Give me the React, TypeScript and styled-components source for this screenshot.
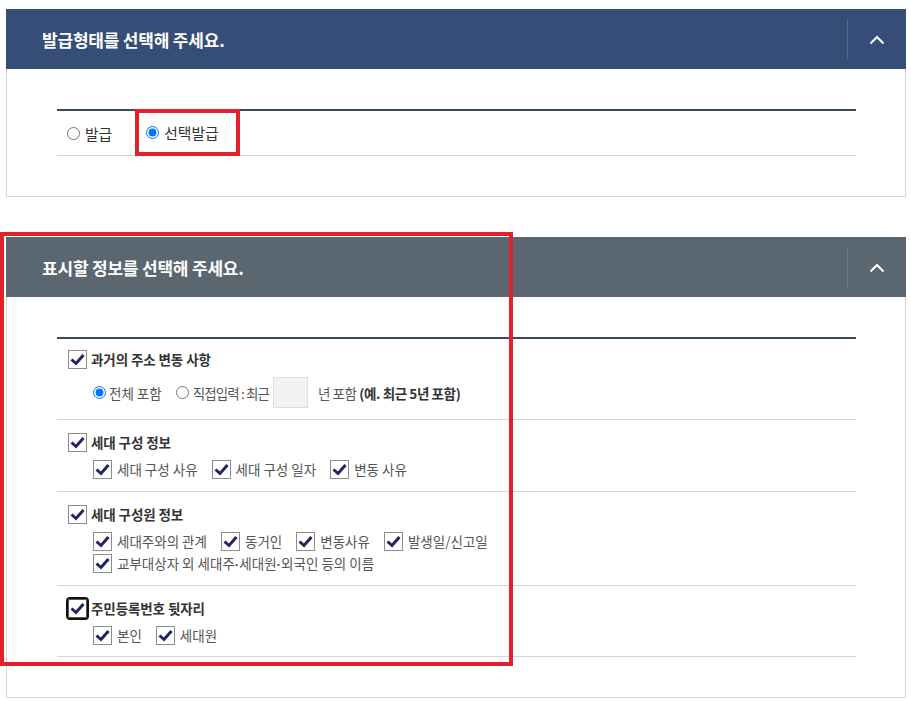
import React from "react";
import styled, { createGlobalStyle } from "styled-components";

const GlobalStyle = createGlobalStyle`
  html, body { margin: 0; padding: 0; background: #fff; }
  body {
    font-family: "Noto Sans CJK KR", "Noto Sans", sans-serif;
    color: #333;
    font-size: 13px;
  }
  * { box-sizing: border-box; }
`;

const Page = styled.div`
  width: 906px;
  padding: 9px 0 4px 6px;
  display: flex;
  flex-direction: column;
  gap: 40px;
`;

const Panel = styled.section`
  position: relative;
  width: 900px;
`;

const Header = styled.div<{ $tone: string }>`
  height: 60px;
  background: ${(p) => p.$tone};
  display: flex;
  align-items: center;
`;

const Title = styled.h2`
  flex: 1;
  margin: 0;
  padding-left: 36px;
  font-size: 17px;
  font-weight: 700;
  color: #fff;
  letter-spacing: -0.2px;
`;

const Toggle = styled.button`
  width: 59px;
  height: 40px;
  padding: 2px 0 0 0;
  border: none;
  border-left: 1px solid rgba(255, 255, 255, 0.14);
  background: transparent;
  display: flex;
  align-items: center;
  justify-content: center;
  cursor: pointer;
`;

const Body = styled.div`
  border: 1px solid #d6d6d6;
  border-top: none;
  padding: 40px 49px 40px 50px;
`;

const Table = styled.div`
  border-top: 2px solid #3c4a60;
`;

const RadioRow = styled.div`
  height: 45px;
  border-bottom: 1px solid #d6d6d6;
  display: flex;
  align-items: center;
  padding-left: 10px;
  gap: 23px;
`;

const RadioLabel = styled.label<{ $highlight?: boolean }>`
  display: flex;
  align-items: center;
  gap: 5px;
  font-size: 14.8px;
  color: #333;
  ${(p) =>
    p.$highlight
      ? `
    align-self: stretch;
    margin: -2px 0 -1px 0;
    padding: 0 17px 0 7px;
    border: 4px solid #e4202c;
  `
      : ""}
`;

const Radio = styled.input.attrs({ type: "radio" })`
  width: 13px;
  height: 13px;
  margin: 0;
`;

const Row = styled.div<{ $pt?: number; $pb?: number }>`
  border-bottom: 1px solid #d6d6d6;
  padding: ${(p) => p.$pt ?? 11}px 0 ${(p) => p.$pb ?? 11}px 11px;
  display: flex;
  flex-direction: column;
  gap: 5px;
`;

const MainLine = styled.label`
  height: 22px;
  display: flex;
  align-items: center;
  gap: 4px;
  font-size: 13.5px;
  font-weight: 700;
  color: #333;
  letter-spacing: -0.1px;
`;

const SubLines = styled.div<{ $mt?: number }>`
  margin-top: ${(p) => p.$mt ?? 0}px;
  padding-left: 25px;
  display: flex;
  flex-direction: column;
`;

const SubLine = styled.div<{ $h?: number }>`
  height: ${(p) => p.$h ?? 22}px;
  display: flex;
  align-items: center;
  gap: 14px;
  font-size: 13.5px;
  color: #555;
`;

const SubItem = styled.label`
  display: flex;
  align-items: center;
  gap: 5px;
`;

const RadioItem = styled.label<{ $gap?: number }>`
  display: flex;
  align-items: center;
  gap: ${(p) => p.$gap ?? 3}px;
`;

const Compact = styled.span<{ $ls: number }>`
  letter-spacing: ${(p) => p.$ls}px;
`;

const YearBox = styled.input.attrs({ type: "text" })`
  width: 35px;
  height: 31px;
  margin: 0 6px 0 0;
  border: 1px solid #dedede;
  background: #f2f2f2;
`;

const Note = styled.span`
  font-weight: 700;
  color: #333;
`;

const Dot = styled.span`
  font-family: "Liberation Sans", sans-serif;
  font-weight: 700;
`;

const Box = styled.span<{ $focus?: boolean }>`
  flex: none;
  width: 19px;
  height: 19px;
  border: 1px solid #8c8c8c;
  background: #fff;
  display: flex;
  align-items: center;
  justify-content: center;
  ${(p) =>
    p.$focus
      ? `
    outline: 2px solid #111;
    outline-offset: 0px;
    border-radius: 2px;
    border-color: #555;
  `
      : ""}
`;

const Overlay = styled.div`
  position: absolute;
  left: -6px;
  top: -5px;
  width: 513px;
  height: 434px;
  border: 4px solid #e4202c;
  pointer-events: none;
`;

const Check = ({ focus }: { focus?: boolean }) => (
  <Box $focus={focus}>
    <svg width="15" height="13" viewBox="0 0 15 13">
      <polyline
        points="1.5,6.5 6,10.5 13.5,2"
        fill="none"
        stroke="#1f2560"
        strokeWidth="3"
      />
    </svg>
  </Box>
);

const Chevron = () => (
  <svg width="16" height="10" viewBox="0 0 16 10">
    <polyline points="1.5,8.5 8,2 14.5,8.5" fill="none" stroke="#fff" strokeWidth="2" />
  </svg>
);

export default function App() {
  return (
    <>
      <GlobalStyle />
      <Page>
        <Panel>
          <Header $tone="#354d77">
            <Title>발급형태를 선택해 주세요.</Title>
            <Toggle aria-label="접기">
              <Chevron />
            </Toggle>
          </Header>
          <Body>
            <Table>
              <RadioRow>
                <RadioLabel>
                  <Radio name="issue" />
                  발급
                </RadioLabel>
                <RadioLabel $highlight>
                  <Radio name="issue" defaultChecked />
                  선택발급
                </RadioLabel>
              </RadioRow>
            </Table>
          </Body>
        </Panel>

        <Panel>
          <Header $tone="#5a6770">
            <Title>표시할 정보를 선택해 주세요.</Title>
            <Toggle aria-label="접기">
              <Chevron />
            </Toggle>
          </Header>
          <Body>
            <Table>
              <Row $pt={9}>
                <MainLine>
                  <Check />
                  과거의 주소 변동 사항
                </MainLine>
                <SubLines $mt={2}>
                  <SubLine $h={31}>
                    <RadioItem>
                      <Radio name="range" defaultChecked />
                      전체 포함
                    </RadioItem>
                    <RadioItem $gap={4}>
                      <Radio name="range" />
                      <Compact $ls={-0.9}>직접입력 : 최근</Compact>
                      <YearBox aria-label="년수" />
                      <Compact $ls={-0.4}>
                        년 포함 <Note>(예. 최근 5년 포함)</Note>
                      </Compact>
                    </RadioItem>
                  </SubLine>
                </SubLines>
              </Row>
              <Row>
                <MainLine>
                  <Check />
                  세대 구성 정보
                </MainLine>
                <SubLines>
                  <SubLine>
                    <SubItem>
                      <Check />
                      세대 구성 사유
                    </SubItem>
                    <SubItem>
                      <Check />
                      세대 구성 일자
                    </SubItem>
                    <SubItem>
                      <Check />
                      변동 사유
                    </SubItem>
                  </SubLine>
                </SubLines>
              </Row>
              <Row>
                <MainLine>
                  <Check />
                  세대 구성원 정보
                </MainLine>
                <SubLines>
                  <SubLine>
                    <SubItem>
                      <Check />
                      세대주와의 관계
                    </SubItem>
                    <SubItem>
                      <Check />
                      동거인
                    </SubItem>
                    <SubItem>
                      <Check />
                      변동사유
                    </SubItem>
                    <SubItem>
                      <Check />
                      발생일/신고일
                    </SubItem>
                  </SubLine>
                  <SubLine>
                    <SubItem>
                      <Check />
                      <span>
                        교부대상자 외 세대주<Dot>·</Dot>세대원<Dot>·</Dot>외국인 등의 이름
                      </span>
                    </SubItem>
                  </SubLine>
                </SubLines>
              </Row>
              <Row $pb={10}>
                <MainLine>
                  <Check focus />
                  주민등록번호 뒷자리
                </MainLine>
                <SubLines>
                  <SubLine>
                    <SubItem>
                      <Check />
                      본인
                    </SubItem>
                    <SubItem>
                      <Check />
                      세대원
                    </SubItem>
                  </SubLine>
                </SubLines>
              </Row>
            </Table>
          </Body>
          <Overlay />
        </Panel>
      </Page>
    </>
  );
}
